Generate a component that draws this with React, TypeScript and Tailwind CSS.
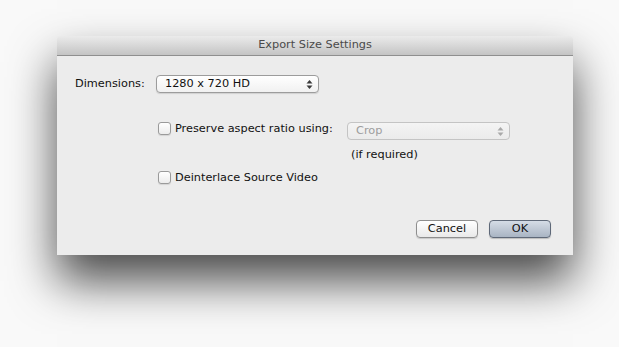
import React from "react";

const font = { fontFamily: '"DejaVu Sans", "Noto Sans", sans-serif' };

function Stepper({ dim = false }: { dim?: boolean }) {
  const c = dim ? "#a9a9a9" : "#3a3a3a";
  return (
    <svg width="7" height="11" viewBox="0 0 7 11">
      <path d="M3.5 1 L6.5 4.5 L0.5 4.5 Z" fill={c} />
      <path d="M3.5 10 L6.5 6.5 L0.5 6.5 Z" fill={c} />
    </svg>
  );
}

function Popup({ label, width, dim = false }: { label: string; width: string; dim?: boolean }) {
  return (
    <div
      className={`${width} h-[18px] flex items-center justify-between pl-[8px] pr-[5px] rounded-[4px] border ${
        dim
          ? "border-[#c4c4c4] bg-gradient-to-b from-[#f4f4f4] to-[#ebebeb] text-[#9d9d9d]"
          : "border-[#9c9c9c] bg-gradient-to-b from-white to-[#f1f1f1] text-[#111] shadow-[0_1px_1px_rgba(0,0,0,0.12)]"
      } text-[11.3px] leading-none`}
    >
      <span>{label}</span>
      <Stepper dim={dim} />
    </div>
  );
}

function Check({ label }: { label: string }) {
  return (
    <div className="flex items-center gap-[4px] text-[11.3px] text-[#111] leading-none">
      <div className="w-[13px] h-[13px] rounded-[3px] border border-[#9a9a9a] bg-gradient-to-b from-white to-[#ececec] shadow-[0_1px_1px_rgba(0,0,0,0.1)]" />
      <span>{label}</span>
    </div>
  );
}

export default function App() {
  return (
    <div className="w-[619px] h-[347px] bg-[#f9f9f9] pt-[36px] pl-[57px]" style={font}>
      <div className="w-[516px] h-[219px] flex flex-col bg-[#ececec] shadow-[0_26px_44px_rgba(0,0,0,0.7)]">
        <div className="h-[20px] flex items-center justify-center bg-gradient-to-b from-[#ebebeb] to-[#c4c4c4] border-b border-[#8f8f8f] text-[11.3px] text-[#4a4a4a] rounded-t-[4px]">
          Export Size Settings
        </div>
        <div className="flex-1 flex flex-col pl-[18px] pr-[22px] pt-[19px] pb-[17px]">
          <div className="flex items-center">
            <span className="w-[81px] text-[11.3px] text-[#111]">Dimensions:</span>
            <Popup label="1280 x 720 HD" width="w-[163px]" />
          </div>
          <div className="flex flex-col pl-[83px] mt-[29px]">
            <div className="flex items-start justify-between w-[352px]">
              <Check label="Preserve aspect ratio using:" />
              <Popup label="Crop" width="w-[163px]" dim />
            </div>
            <div className="pl-[193px] mt-[9px] text-[11.3px] text-[#111] leading-none">(if required)</div>
            <div className="mt-[11px]">
              <Check label="Deinterlace Source Video" />
            </div>
          </div>
          <div className="mt-auto flex justify-end gap-[11px]">
            <button className="w-[62px] h-[18px] rounded-[4px] border border-[#8e8e8e] bg-gradient-to-b from-white to-[#e9e9e9] text-[11.3px] text-[#111] leading-none shadow-[0_1px_1px_rgba(0,0,0,0.15)]">
              Cancel
            </button>
            <button className="w-[62px] h-[18px] rounded-[4px] border border-[#5e6878] bg-gradient-to-b from-[#d5dce6] to-[#a9b4c3] text-[11.3px] text-[#111] leading-none shadow-[0_1px_1px_rgba(0,0,0,0.2)]">
              OK
            </button>
          </div>
        </div>
      </div>
    </div>
  );
}
